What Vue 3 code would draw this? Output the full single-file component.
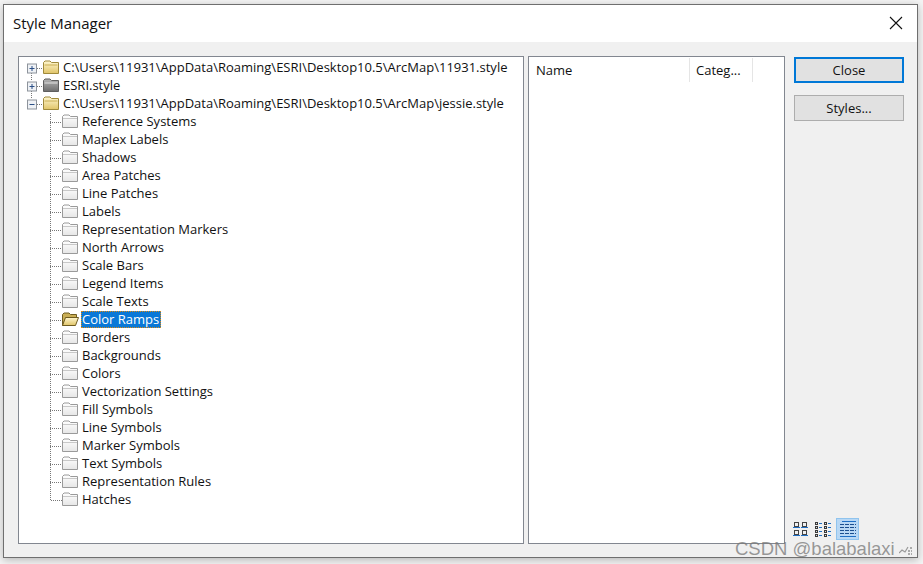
<script setup>
const roots = [
  { label: 'C:\\Users\\11931\\AppData\\Roaming\\ESRI\\Desktop10.5\\ArcMap\\11931.style', open: false, tone: 'gold' },
  { label: 'ESRI.style', open: false, tone: 'grey' },
  { label: 'C:\\Users\\11931\\AppData\\Roaming\\ESRI\\Desktop10.5\\ArcMap\\jessie.style', open: true, tone: 'gold' }
]
const children = ['Reference Systems', 'Maplex Labels', 'Shadows', 'Area Patches', 'Line Patches', 'Labels', 'Representation Markers', 'North Arrows', 'Scale Bars', 'Legend Items', 'Scale Texts', 'Color Ramps', 'Borders', 'Backgrounds', 'Colors', 'Vectorization Settings', 'Fill Symbols', 'Line Symbols', 'Marker Symbols', 'Text Symbols', 'Representation Rules', 'Hatches']
</script>

<template>
  <div class="stage">
    <svg class="defs" width="0" height="0">
      <defs>
        <linearGradient id="gold" x1="0" y1="0" x2="0" y2="1"><stop offset="0" stop-color="#fff7d0" /><stop offset="1" stop-color="#e0c468" /></linearGradient>
        <linearGradient id="grey" x1="0" y1="0" x2="0" y2="1"><stop offset="0" stop-color="#b5b5b5" /><stop offset="1" stop-color="#6e6e6e" /></linearGradient>
        <linearGradient id="pale" x1="0" y1="0" x2="0" y2="1"><stop offset="0" stop-color="#ffffff" /><stop offset="1" stop-color="#e6e6e6" /></linearGradient>
      </defs>
    </svg>
    <div class="window">
      <header class="titlebar">
        <span class="title">Style Manager</span>
        <svg class="close-x" width="14" height="14" viewBox="0 0 14 14"><path d="M1 1L13 13M13 1L1 13" stroke="#111" stroke-width="1.1" fill="none" /></svg>
      </header>
      <main class="body">
        <section class="pane tree">
          <div v-for="(r, i) in roots" :key="r.label" class="row root">
            <svg class="expander" width="18" height="18" viewBox="0 0 18 18">
              <path v-if="i > 0" d="M5.5 0V4" stroke="#777" stroke-dasharray="1 1" fill="none" />
              <path v-if="i < 2" d="M5.5 14V18" stroke="#777" stroke-dasharray="1 1" fill="none" />
              <path d="M11 9.5H17" stroke="#777" stroke-dasharray="1 1" fill="none" />
              <rect x="1.5" y="5" width="9" height="9" fill="#eef1f5" stroke="#8d939b" />
              <path d="M3.5 9.5H8.5" stroke="#2b4f86" fill="none" />
              <path v-if="!r.open" d="M6 7V12" stroke="#2b4f86" fill="none" />
            </svg>
            <svg class="folder" width="18" height="14" viewBox="0 0 18 14">
              <path d="M1.5 13.5V2.5L3 1H8L9.5 2.5H16.5V13.5Z" :fill="r.tone === 'gold' ? 'url(#gold)' : 'url(#grey)'" :stroke="r.tone === 'gold' ? '#a08a3c' : '#5f5f5f'" />
              <path d="M2.5 5H15.5" :stroke="r.tone === 'gold' ? '#c9ae55' : '#e0e0e0'" fill="none" />
            </svg>
            <span class="label">{{ r.label }}</span>
          </div>
          <div v-for="(c, i) in children" :key="c" class="row child">
            <svg class="stem" width="12" height="18" viewBox="0 0 12 18">
              <path :d="i === children.length - 1 ? 'M.5 0V9.5H12' : 'M.5 0V18M0 9.5H12'" stroke="#777" stroke-dasharray="1 1" fill="none" />
            </svg>
            <svg v-if="c === 'Color Ramps'" class="folder" width="18" height="14" viewBox="0 0 18 14">
              <path d="M1.5 13.5V2.5L3 1H8L9.5 2.5H15.5V5.5H5L1.5 13.5Z" fill="#c9ae55" stroke="#6f5c20" />
              <path d="M1.5 13.5L4.5 5.5H17.5L14.5 13.5Z" fill="url(#gold)" stroke="#6f5c20" />
            </svg>
            <svg v-else class="folder" width="18" height="14" viewBox="0 0 18 14">
              <path d="M1.5 13.5V2.5L3 1H8L9.5 2.5H16.5V13.5Z" fill="url(#pale)" stroke="#9a9a9a" />
              <path d="M2 4.5H16" stroke="#c8c8c8" fill="none" />
            </svg>
            <span class="label" :class="{ selected: c === 'Color Ramps' }">{{ c }}</span>
          </div>
        </section>
        <section class="pane list">
          <div class="list-head">
            <span class="col name">Name</span>
            <span class="col categ">Categ...</span>
          </div>
        </section>
        <aside class="side">
          <button class="btn primary">Close</button>
          <button class="btn">Styles...</button>
          <div class="views">
            <span class="view">
              <svg width="16" height="16" viewBox="0 0 16 16" fill="none">
                <rect x="2.5" y="1.5" width="4" height="4" stroke="#444" /><rect x="10.5" y="1.5" width="4" height="4" stroke="#444" />
                <path d="M1 6.5H8M9 6.5H16" stroke="#1f6fc4" />
                <rect x="2.5" y="9.5" width="4" height="4" stroke="#444" /><rect x="10.5" y="9.5" width="4" height="4" stroke="#444" />
                <path d="M1 14.5H8M9 14.5H16" stroke="#1f6fc4" />
              </svg>
            </span>
            <span class="view">
              <svg width="16" height="16" viewBox="0 0 16 16" fill="none">
                <path d="M0 2.5h3M0 6.5h3M0 10.5h3M0 14.5h3M9 2.5h3M9 6.5h3M9 10.5h3M9 14.5h3" stroke="#3a3a3a" stroke-width="3" />
                <path d="M1 2.5h1M1 6.5h1M1 10.5h1M1 14.5h1M10 2.5h1M10 6.5h1M10 10.5h1M10 14.5h1" stroke="#ddd" />
                <path d="M4 2.5h3M4 6.5h3M4 10.5h3M4 14.5h3M13 2.5h3M13 6.5h3M13 10.5h3M13 14.5h3" stroke="#1f6fc4" />
              </svg>
            </span>
            <span class="view active">
              <svg width="18" height="16" viewBox="0 0 18 16" fill="none">
                <path d="M3 .5H17" stroke="#1f6fc4" />
                <path d="M1 3.5H17M1 6.5H17M1 9.5H17M1 12.5H17" stroke="#1b4f8f" stroke-dasharray="4 1" />
                <path d="M1 15.5H17" stroke="#1f6fc4" />
              </svg>
            </span>
          </div>
        </aside>
      </main>
    </div>
    <div class="watermark">
      <span>CSDN @balabalaxi</span>
      <svg width="13" height="11" viewBox="0 0 13 11" fill="none">
        <path d="M0 8L3 5L6 7L9 2" stroke="#999" stroke-width="1.2" />
        <path d="M9 9H13M9 6H13M11 3H13" stroke="#aaa" stroke-width="2" stroke-dasharray="2 1" />
      </svg>
    </div>
  </div>
</template>

<style>
html, body { margin: 0; background: #f4f4f4; overflow: hidden; }
</style>

<style scoped>
.stage {
  position: relative;
  width: 923px;
  height: 564px;
  padding: 4px 5px 6px 3px;
  box-sizing: border-box;
  font-family: "Open Sans", "Noto Sans", "Liberation Sans", sans-serif;
  font-size: 13px;
  color: #111;
}
.defs { position: absolute; }
.window {
  height: 100%;
  box-sizing: border-box;
  display: flex;
  flex-direction: column;
  background: #f0f0f0;
  border: 1px solid #6f6f6f;
  box-shadow: 0 2px 8px rgba(0, 0, 0, .25);
}
.titlebar {
  height: 37px;
  flex: none;
  background: #fff;
  display: flex;
  align-items: center;
  justify-content: space-between;
  padding: 0 14px 2px 9px;
  box-sizing: border-box;
}
.title { font-size: 15px; }
.body {
  flex: 1;
  display: flex;
  padding: 14px 0 13px 14px;
  min-height: 0;
}
.pane {
  background: #fff;
  border: 1px solid #828790;
  box-sizing: border-box;
}
.tree { width: 506px; padding-top: 2px; padding-left: 7px; }
.list { width: 257px; margin-left: 4px; }
.row { display: flex; align-items: center; height: 18px; white-space: nowrap; }
.expander { flex: none; }
.folder { margin-top: -2px; margin-left: -2px; flex: none; }
.child .folder { margin-left: -1px; }
.label { margin-left: 2px; padding: 0 1px; line-height: 18px; margin-top: -3px; }
.child { padding-left: 24px; }
.stem { flex: none; }
.selected {
  background: #0a78d7;
  color: #fff;
  outline: 1px dotted #e08a10;
  outline-offset: -1px;
  height: 17px;
  line-height: 16px;
  padding: 0 2px 0 1px;
  margin-left: 2px;
  margin-top: -1px;
}
.list-head { display: flex; height: 24px; margin-top: 1px; }
.col { display: flex; align-items: center; border-right: 1px solid #e5e5e5; box-sizing: border-box; padding-left: 7px; }
.name { width: 161px; }
.categ { width: 63px; padding-left: 6px; }
.side {
  width: 110px;
  margin-left: 9px;
  display: flex;
  flex-direction: column;
  padding-top: 1px;
  flex: none;
}
.btn {
  font: inherit;
  color: #111;
  height: 26px;
  padding: 0;
  background: #e1e1e1;
  border: 1px solid #adadad;
  margin-bottom: 12px;
}
.btn.primary { border: 2px solid #0078d7; }
.views {
  margin-top: auto;
  margin-left: -5px;
  display: flex;
  align-items: center;
  gap: 2px;
  margin-bottom: 4px;
  height: 22px;
}
.view { width: 21px; height: 22px; display: flex; align-items: center; justify-content: center; }
.view.active { background: #b8d8f5; border: 1px solid #90c4ee; box-sizing: border-box; width: 23px; margin-left: 1px; }
.watermark {
  position: absolute;
  left: 735px;
  top: 538px;
  display: flex;
  align-items: flex-end;
  gap: 4px;
  font-family: "Liberation Sans", sans-serif;
  font-size: 18.5px;
  color: rgba(120, 120, 120, .75);
  white-space: nowrap;
}
.watermark svg { margin-bottom: 4px; }
</style>
